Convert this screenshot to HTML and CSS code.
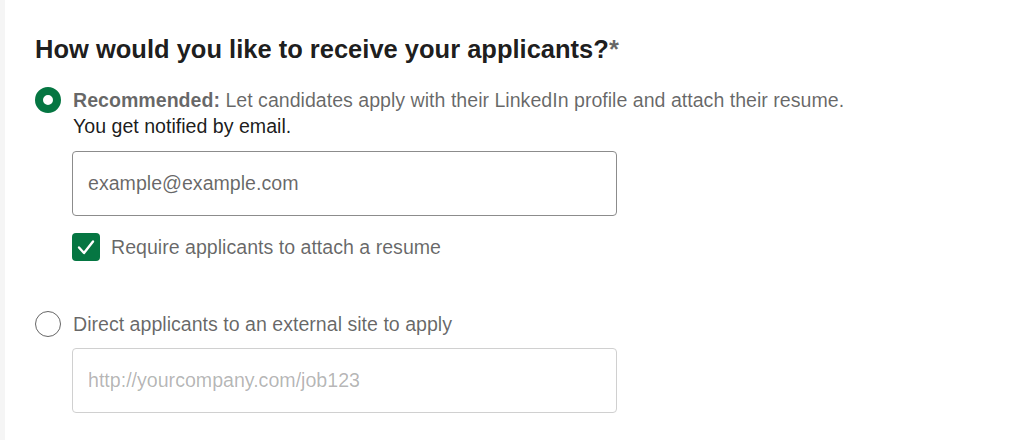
FILE: index.html
```html
<!DOCTYPE html>
<html lang="en">
<head>
<meta charset="utf-8">
<title>Receive applicants</title>
<link rel="stylesheet" href="styles.css">
</head>
<body>
<div class="page">
  <div class="strip"></div>
  <main class="content">
    <h2 class="title">How would you like to receive your applicants?<span class="req">*</span></h2>

    <div class="option">
      <span class="radio radio-on"></span>
      <div class="option-body">
        <p class="option-text"><strong>Recommended:</strong> Let candidates apply with their LinkedIn profile and attach their resume.</p>
        <p class="option-sub">You get notified by email.</p>
        <div class="field"><span class="ph">example@example.com</span></div>
        <div class="check-row">
          <span class="checkbox">
            <svg viewBox="0 0 28 28" width="28" height="28"><path d="M7 14.5 L12 20 L21 8.5" fill="none" stroke="#fff" stroke-width="2.4" stroke-linecap="round" stroke-linejoin="round"/></svg>
          </span>
          <span class="check-label">Require applicants to attach a resume</span>
        </div>
      </div>
    </div>

    <div class="option option-2">
      <span class="radio"></span>
      <div class="option-body">
        <p class="option-text">Direct applicants to an external site to apply</p>
        <div class="field field-off"><span class="ph ph-off">http://yourcompany.com/job123</span></div>
      </div>
    </div>
  </main>
</div>
</body>
</html>
```

FILE: styles.css
```css
* { box-sizing: border-box; }
html, body { margin: 0; padding: 0; background: #fff; }
body {
  font-family: "Liberation Sans", Arial, sans-serif;
  color: rgba(0,0,0,0.9);
}
.page { display: flex; height: 440px; }
.strip { width: 5px; background: #f5f5f5; flex: none; }
.content { flex: 1; padding: 33px 0 0 30px; }
.title {
  margin: 0 0 22px;
  font-size: 25.5px;
  line-height: 32px;
  font-weight: 700;
  color: rgba(0,0,0,0.9);
}
.req { color: rgba(0,0,0,0.6); }
.option { display: flex; gap: 12px; align-items: flex-start; }
.option-2 { margin-top: 50px; }
.radio {
  flex: none;
  width: 26px;
  height: 26px;
  border-radius: 50%;
  border: 1.5px solid #666;
  background: #fff;
}
.radio-on { border: 8px solid #057642; }
.option-body { display: flex; flex-direction: column; }
.option-text {
  margin: 0;
  font-size: 19.6px;
  line-height: 26px;
  color: rgba(0,0,0,0.6);
}
.option-text strong { font-weight: 700; }
.option-sub {
  margin: 0;
  font-size: 19.6px;
  line-height: 26px;
  color: rgba(0,0,0,0.9);
}
.field {
  margin-top: 12px;
  margin-left: -1px;
  width: 545px;
  height: 65px;
  border: 1px solid #8c8c8c;
  border-radius: 4px;
  display: flex;
  align-items: center;
  padding: 0 15px;
}
.option-2 .field { margin-top: 11px; }
.field-off { border-color: #d0d0d0; }
.ph { font-size: 19.6px; color: rgba(0,0,0,0.6); }
.ph-off { color: rgba(0,0,0,0.3); }
.check-row { display: flex; align-items: center; gap: 11px; margin-top: 17px; margin-left: -1px; }
.checkbox {
  flex: none;
  width: 28px;
  height: 28px;
  border-radius: 4px;
  background: #057642;
  display: flex;
}
.check-label { font-size: 19.6px; color: rgba(0,0,0,0.6); }
```
